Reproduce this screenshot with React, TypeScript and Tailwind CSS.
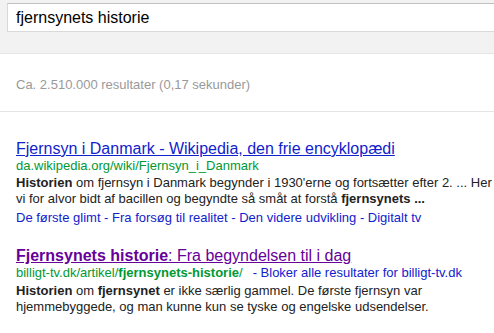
export default function App() {
  return (
    <div className="min-h-screen bg-white font-['Liberation_Sans',Arial,sans-serif] text-[13px] text-[#222] overflow-hidden">
      <div className="h-[54px] bg-[#f2f2f2] border-b border-[#e5e5e5] pt-[3px] pl-[7px]">
        <div className="h-[29px] w-[600px] bg-white border border-[#d9d9d9] border-t-[#c0c0c0] pl-[8px] flex items-center text-[16px] text-black">
          fjernsynets historie
        </div>
      </div>

      <div className="h-[58px] border-b border-[#e5e5e5] pl-[16px] pt-[23px] text-[#999] leading-[16px]">
        Ca. 2.510.000 resultater (0,17 sekunder)
      </div>

      <div className="pl-[16px] pt-[27px] whitespace-nowrap">
        <div>
          <div className="text-[16px] leading-[19px] text-[#1122cc] underline">
            Fjernsyn i Danmark - Wikipedia, den frie encyklopædi
          </div>
          <div className="text-[#009933] leading-[15px]">da.wikipedia.org/wiki/Fjernsyn_i_Danmark</div>
          <div className="leading-[16px] mt-[2px]">
            <b>Historien</b> om fjernsyn i Danmark begynder i 1930'erne og fortsætter efter 2. ... Her
            <br />
            vi for alvor bidt af bacillen og begyndte så småt at forstå <b>fjernsynets ...</b>
          </div>
          <div className="text-[#1122cc] leading-[16px] mt-[3px]">
            De første glimt - Fra forsøg til realitet - Den videre udvikling - Digitalt tv
          </div>
        </div>

        <div className="mt-[20px]">
          <div className="text-[16px] leading-[19px] text-[#660099] underline">
            <b>Fjernsynets historie</b>: Fra begyndelsen til i dag
          </div>
          <div className="leading-[15px]">
            <span className="text-[#009933]">
              billigt-tv.dk/artikel/<b>fjernsynets-historie</b>/
            </span>
            <span className="text-[#1122cc] ml-[10px]">- Bloker alle resultater for billigt-tv.dk</span>
          </div>
          <div className="leading-[16px] mt-[3px]">
            <b>Historien</b> om <b>fjernsynet</b> er ikke særlig gammel. De første fjernsyn var
            <br />
            hjemmebyggede, og man kunne kun se tyske og engelske udsendelser.
          </div>
        </div>
      </div>
    </div>
  );
}
